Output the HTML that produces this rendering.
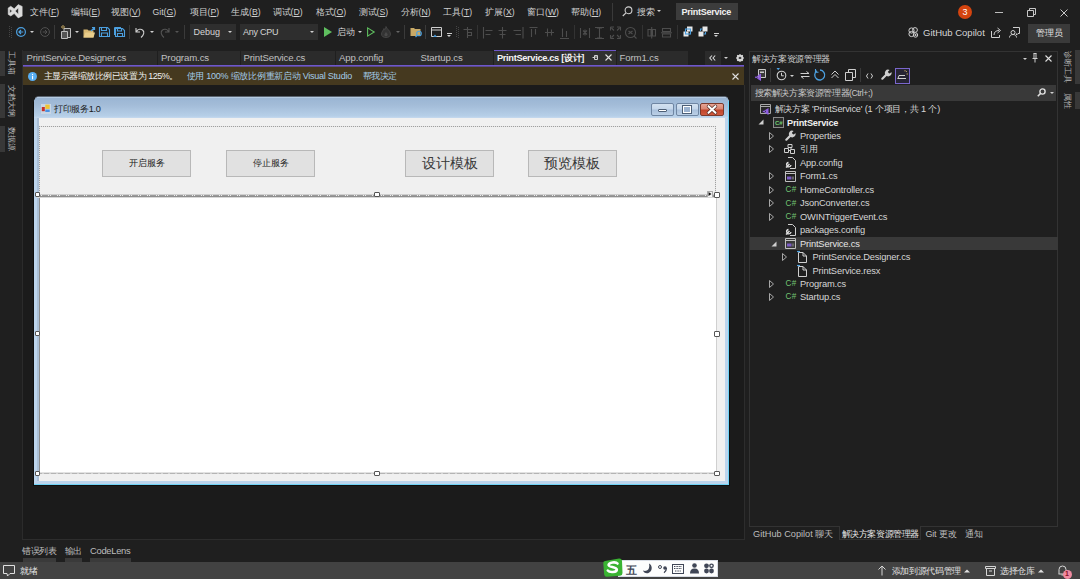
<!DOCTYPE html>
<html><head><meta charset="utf-8">
<style>
*{box-sizing:border-box;margin:0;padding:0}
html,body{width:1080px;height:579px;overflow:hidden;background:#1f1f1f;font-family:"Liberation Sans",sans-serif;color:#d6d6d6}
.a{position:absolute}
.t{position:absolute;font-size:9px;line-height:12px;height:12px;white-space:nowrap}
.m{color:#cfcfcf;font-size:8.7px}
.m u{text-decoration:underline;text-underline-offset:1px}
svg{position:absolute;overflow:visible}
.sep{position:absolute;width:1px;background:#3a3a3a}
.dd{position:absolute;width:0;height:0;border-left:2.5px solid transparent;border-right:2.5px solid transparent;border-top:2.5px solid #d0d0d0}
</style></head><body>

<!-- ===== TITLE / MENU BAR ===== -->
<svg style="left:0;top:0" width="30" height="22" viewBox="0 0 30 22">
 <path d="M8.2 8 L10.8 6.2 L14.2 8.8 L18.2 4.6 L22.2 6.4 V16.1 L18.2 17.9 L14.2 13.6 L10.8 16 L8.2 14.4 Z M9.8 9.3 V12.9 L12.2 11.1 Z M18.3 7.9 L15.3 11.1 L18.3 14.2 Z" fill="#dcdcdc" fill-rule="evenodd" stroke="#dcdcdc" stroke-width="0.5" stroke-linejoin="round"/>
</svg>
<div class="t m" style="left:30px;top:6px">文件(<u>F</u>)</div>
<div class="t m" style="left:70.5px;top:6px">编辑(<u>E</u>)</div>
<div class="t m" style="left:111px;top:6px">视图(<u>V</u>)</div>
<div class="t m" style="left:152.5px;top:6px">Git(<u>G</u>)</div>
<div class="t m" style="left:189.5px;top:6px">项目(<u>P</u>)</div>
<div class="t m" style="left:231px;top:6px">生成(<u>B</u>)</div>
<div class="t m" style="left:272.5px;top:6px">调试(<u>D</u>)</div>
<div class="t m" style="left:315.5px;top:6px">格式(<u>O</u>)</div>
<div class="t m" style="left:358.5px;top:6px">测试(<u>S</u>)</div>
<div class="t m" style="left:400.5px;top:6px">分析(<u>N</u>)</div>
<div class="t m" style="left:443px;top:6px">工具(<u>T</u>)</div>
<div class="t m" style="left:485px;top:6px">扩展(<u>X</u>)</div>
<div class="t m" style="left:527px;top:6px">窗口(<u>W</u>)</div>
<div class="t m" style="left:571px;top:6px">帮助(<u>H</u>)</div>
<div class="sep" style="left:612px;top:3px;height:18px"></div>
<svg style="left:622px;top:6px" width="11" height="11" viewBox="0 0 11 11"><circle cx="6.5" cy="4.3" r="3.4" fill="none" stroke="#cfcfcf" stroke-width="1.1"/><path d="M4 6.8 L0.8 10" stroke="#cfcfcf" stroke-width="1.2"/></svg>
<div class="t m" style="left:637px;top:6px">搜索</div>
<div class="dd" style="left:657px;top:10px"></div>
<div class="a" style="left:676px;top:3px;width:62px;height:17px;background:#3c3c3c"></div>
<div class="t" style="left:681.5px;top:5.5px;color:#f2f2f2;font-weight:bold;font-size:9px;letter-spacing:-0.25px">PrintService</div>

<div class="a" style="left:958px;top:4.5px;width:14px;height:14px;border-radius:50%;background:#d4440f"></div>
<div class="t" style="left:958px;top:5.5px;width:14px;text-align:center;color:#fff;font-size:9px">3</div>
<div class="a" style="left:995px;top:11.5px;width:8px;height:1px;background:#bdbdbd"></div>
<svg style="left:1027px;top:8px" width="9" height="9" viewBox="0 0 9 9"><path d="M0.5 2.5 H6.5 V8.5 H0.5 Z M2.5 2.5 V0.5 H8.5 V6.5 H6.5" fill="none" stroke="#c8c8c8" stroke-width="1"/></svg>
<svg style="left:1060px;top:8.5px" width="8" height="8" viewBox="0 0 8 8"><path d="M0.5 0.5 L7.5 7.5 M7.5 0.5 L0.5 7.5" stroke="#c8c8c8" stroke-width="1"/></svg>

<!-- ===== TOOLBAR ===== -->
<svg style="left:8px;top:26px" width="4" height="13" viewBox="0 0 4 13"><path d="M1 0.5h1M3 1.5h1M1 2.5h1M3 3.5h1M1 4.5h1M3 5.5h1M1 6.5h1M3 7.5h1M1 8.5h1M3 9.5h1M1 10.5h1M3 11.5h1" stroke="#454545" stroke-width="1"/></svg>
<svg style="left:16px;top:26.5px" width="10" height="10" viewBox="0 0 10 10"><circle cx="5" cy="5" r="4.4" fill="none" stroke="#4ca0e0" stroke-width="1.2"/><path d="M7.3 5 H3 M5 3 L3 5 L5 7" fill="none" stroke="#4ca0e0" stroke-width="1.2"/></svg>
<div class="dd" style="left:30px;top:30.5px"></div>
<svg style="left:39.5px;top:26.5px" width="10" height="10" viewBox="0 0 10 10"><circle cx="5" cy="5" r="4.4" fill="none" stroke="#505050" stroke-width="1"/><path d="M2.7 5 H7 M5 3 L7 5 L5 7" fill="none" stroke="#505050" stroke-width="1"/></svg>
<div class="sep" style="left:54px;top:25px;height:14px"></div>
<svg style="left:60px;top:25px" width="13" height="14" viewBox="0 0 13 14"><path d="M4 3.5 H10.5 V12.5 H4 Z" fill="#3a3a3a" stroke="#bdbdbd" stroke-width="1"/><path d="M1.5 6.5 H7.5 V13.5 H1.5 Z" fill="#555" stroke="#bdbdbd" stroke-width="1"/><path d="M3 0.5 L4.5 2 L3 3.5 L1.5 2 Z" fill="none" stroke="#d9b86a" stroke-width="1"/></svg>
<div class="dd" style="left:74.5px;top:30.5px"></div>
<svg style="left:83px;top:26px" width="13" height="12" viewBox="0 0 13 12"><path d="M0.5 3.5 H4.5 L5.5 4.5 H10.5 V11.5 H0.5 Z" fill="#d8b872"/><path d="M0.5 11.5 L2.5 6.5 H12 L10.5 11.5 Z" fill="#e9cd8a"/><path d="M8 5 L11.5 1.5 M9 1.5 H11.5 V4" stroke="#4ca0e0" stroke-width="1.2" fill="none"/></svg>
<svg style="left:98.5px;top:27px" width="11" height="10" viewBox="0 0 11 10"><path d="M0.5 0.5 H8.5 L10.5 2.5 V9.5 H0.5 Z M2.5 0.5 V3.5 H7.5 V0.5 M2.5 9.5 V6 H8.5 V9.5" fill="none" stroke="#4ca0e0" stroke-width="1.1"/></svg>
<svg style="left:113.5px;top:27px" width="11" height="10" viewBox="0 0 11 10"><path d="M1.5 1.5 H8.5 L10.5 3.5 V9.5 H1.5 Z M3.5 1.5 V4 H7.5 V1.5 M3.5 9.5 V6.5 H8.5 V9.5" fill="none" stroke="#4ca0e0" stroke-width="1.1"/><path d="M0.5 8 V0.5 H7" fill="none" stroke="#4ca0e0" stroke-width="1"/></svg>
<div class="sep" style="left:129px;top:25px;height:14px"></div>
<svg style="left:135px;top:26.5px" width="10" height="11" viewBox="0 0 10 11"><path d="M1 1 V5 H5 M1.5 4.5 C3 2 6 1.5 8 3.5 C9.5 5 9 8 6 10.5" fill="none" stroke="#cfcfcf" stroke-width="1.1"/></svg>
<div class="dd" style="left:150px;top:30.5px"></div>
<svg style="left:160px;top:26.5px" width="10" height="11" viewBox="0 0 10 11"><path d="M9 1 V5 H5 M8.5 4.5 C7 2 4 1.5 2 3.5 C0.5 5 1 8 4 10.5" fill="none" stroke="#555" stroke-width="1.1"/></svg>
<div class="dd" style="left:175px;top:30.5px;border-top-color:#555"></div>
<div class="sep" style="left:184px;top:25px;height:14px"></div>

<div class="a" style="left:190px;top:24px;width:46px;height:15.5px;background:#2e2e2e"></div>
<div class="t" style="left:193.5px;top:25.5px;color:#d6d6d6">Debug</div>
<div class="dd" style="left:227.5px;top:30.5px"></div>
<div class="a" style="left:240px;top:24px;width:78px;height:15.5px;background:#2e2e2e"></div>
<div class="t" style="left:243px;top:25.5px;color:#d6d6d6;letter-spacing:-0.25px">Any CPU</div>
<div class="dd" style="left:309.5px;top:30.5px"></div>
<svg style="left:324px;top:27px" width="8" height="10" viewBox="0 0 8 10"><path d="M0 0 L8 5 L0 10 Z" fill="#5fbf5f"/></svg>
<div class="t" style="left:337px;top:25.5px">启动</div>
<div class="dd" style="left:358px;top:30.5px"></div>
<svg style="left:367px;top:27px" width="8" height="10" viewBox="0 0 8 10"><path d="M0.6 0.9 L7.2 5 L0.6 9.1 Z" fill="none" stroke="#5fbf5f" stroke-width="1.1"/></svg>
<svg style="left:381px;top:25.5px" width="10" height="12" viewBox="0 0 10 12"><path d="M5 0.5 C5.5 3 9.5 4.5 9.5 8 C9.5 10.5 7.5 11.5 5 11.5 C2.5 11.5 0.5 10.5 0.5 8 C0.5 5.5 2.5 4.5 3 2.5 C3.5 4 4.5 4.5 5 0.5 Z" fill="#333" stroke="#4a4a4a" stroke-width="0.8"/><path d="M5 6 C6 7.5 7 8 6.5 9.5 C6 10.5 4 10.5 3.5 9.5 C3 8.5 4 7.5 5 6 Z" fill="#4a4a4a"/></svg>
<div class="dd" style="left:395.5px;top:30.5px;border-top-color:#666"></div>
<div class="sep" style="left:404px;top:25px;height:14px"></div>
<svg style="left:410px;top:26px" width="13" height="12" viewBox="0 0 13 12"><path d="M0.5 2 H4 L5 3 H10.5 V10 H0.5 Z" fill="#c8a966"/><circle cx="9" cy="7.5" r="2.3" fill="none" stroke="#4ca0e0" stroke-width="1.1"/><path d="M7.5 9 L5.5 11" stroke="#4ca0e0" stroke-width="1.2"/></svg>
<div class="sep" style="left:425px;top:25px;height:14px"></div>
<svg style="left:431px;top:26.5px" width="11" height="11" viewBox="0 0 11 11"><path d="M0.5 0.5 H10.5 V9.5 H0.5 Z M0.5 3 H10.5" fill="none" stroke="#cfcfcf" stroke-width="1"/><path d="M2 10 L4 7.5 L6 10 Z" fill="#4ca0e0"/></svg>
<div class="a" style="left:446.5px;top:32.5px;width:5px;height:1px;background:#cfcfcf"></div>
<div class="dd" style="left:446.5px;top:34.5px"></div>
<svg style="left:455px;top:26px" width="4" height="13" viewBox="0 0 4 13"><path d="M1 0.5h1M3 1.5h1M1 2.5h1M3 3.5h1M1 4.5h1M3 5.5h1M1 6.5h1M3 7.5h1M1 8.5h1M3 9.5h1M1 10.5h1M3 11.5h1" stroke="#454545" stroke-width="1"/></svg>
<!-- gray layout icons -->
<svg style="left:463px;top:26px" width="10" height="13" viewBox="0 0 10 13" fill="none" stroke="#4d4d4d" stroke-width="1.1"><path d="M0.5 3.5 H9 M4.5 1 V12 M5 6.5 H8.5 V9.5 H5"/></svg>
<div class="sep" style="left:477px;top:25px;height:14px;background:#333"></div>
<svg style="left:483px;top:26px" width="90" height="14" viewBox="0 0 90 14" fill="none" stroke="#4d4d4d" stroke-width="1.1">
 <path d="M0.5 1 V12.5 M2.5 4.5 H9.5 M2.5 8.5 H7.5"/>
 <path d="M19.5 1 V12.5 M15.5 4.5 H23.5 M16.5 8.5 H22.5"/>
 <path d="M40 1 V12.5 M30.5 4.5 H38 M32.5 8.5 H38"/>
 <path d="M46.5 1.5 H54.5 M48.5 3 V11 M52.5 3 V8.5"/>
 <path d="M62 6.5 H71 M64.5 2.5 V10.5 M68.5 3.5 V9.5"/>
 <path d="M77 12.5 H86 M79.5 2.5 V11 M83.5 5 V11"/>
</svg>
<div class="sep" style="left:574px;top:25px;height:14px;background:#333"></div>
<svg style="left:580px;top:26px" width="60" height="14" viewBox="0 0 60 14" fill="none" stroke="#4d4d4d" stroke-width="1.1">
 <path d="M0.5 2 V12 M9.5 2 V12 M3 4.5 L7 8.5 M7 4.5 L3 8.5 M5 3.5 V9.5"/>
 <path d="M15 1.5 H24 M15 12.5 H24 M19.5 2 V12 M17 2 H22 M17 12 H22"/>
 <path d="M30.5 1 H34 M30.5 1 V4.5 M40.5 1 H37 M40.5 1 V4.5 M30.5 12.5 H34 M30.5 12.5 V9 M40.5 12.5 H37 M40.5 12.5 V9 M31.5 2 L34 4.5 M39.5 2 L37 4.5 M31.5 11.5 L34 9 M39.5 11.5 L37 9"/>
 <circle cx="50.5" cy="6.5" r="5"/><path d="M54 10 L56.5 12.5 M48.5 5 L52.5 8 M52.5 5 L48.5 8"/>
</svg>
<div class="sep" style="left:641.5px;top:25px;height:14px;background:#333"></div>
<svg style="left:647px;top:26px" width="26" height="14" viewBox="0 0 26 14" fill="none" stroke="#4d4d4d" stroke-width="1.1">
 <path d="M1 3.5 H4 V10 H1 Z M5.5 3.5 H8.5 V10 H5.5 Z M4.7 1 V12.5"/>
 <path d="M15.5 2.5 H23.5 V5.5 H15.5 Z M15.5 8 H23.5 V11 H15.5 Z M14 6.7 H25"/>
</svg>
<div class="sep" style="left:677px;top:25px;height:14px;background:#333"></div>
<svg style="left:683px;top:26px" width="10" height="11" viewBox="0 0 10 11"><rect x="4" y="0.5" width="5.5" height="5" fill="#e8e8e8"/><rect x="0.5" y="5.5" width="5" height="5" fill="#e8e8e8"/><rect x="2.5" y="3" width="5" height="5" fill="none" stroke="#4ca0e0" stroke-width="1.1"/></svg>
<svg style="left:698px;top:26px" width="10" height="11" viewBox="0 0 10 11"><rect x="4.5" y="0.5" width="5" height="5" fill="#e8e8e8"/><rect x="0.5" y="5.5" width="5" height="5" fill="#e8e8e8"/><path d="M2.5 5 V3 H4.5 M7.5 6 V8 H5.5" fill="none" stroke="#4ca0e0" stroke-width="1.1"/></svg>
<div class="a" style="left:713.5px;top:32.5px;width:5px;height:1px;background:#cfcfcf"></div>
<div class="dd" style="left:713.5px;top:34.5px"></div>

<!-- right title row -->
<svg style="left:908px;top:27px" width="11" height="11" viewBox="0 0 11 11"><circle cx="3.5" cy="3.5" r="2.6" fill="none" stroke="#cfcfcf" stroke-width="1"/><circle cx="7" cy="3" r="2.4" fill="none" stroke="#cfcfcf" stroke-width="1"/><circle cx="3.5" cy="7" r="2.6" fill="none" stroke="#cfcfcf" stroke-width="1"/><circle cx="7.5" cy="8" r="2.2" fill="#1f1f1f" stroke="#cfcfcf" stroke-width="1"/><circle cx="7.5" cy="8" r="1.1" fill="#cfcfcf"/></svg>
<div class="t" style="left:923px;top:26.5px;font-size:9.5px;color:#d6d6d6">GitHub Copilot</div>
<svg style="left:991px;top:27px" width="11" height="11" viewBox="0 0 11 11"><path d="M0.5 4 V10.5 H8.5 V8" fill="none" stroke="#cfcfcf" stroke-width="1"/><path d="M3 8 C3 5 5 3.5 8 3.5 M6.5 1 L9.5 3.5 L6.5 6" fill="none" stroke="#cfcfcf" stroke-width="1"/></svg>
<svg style="left:1009px;top:27px" width="11" height="11" viewBox="0 0 11 11"><path d="M4 0.5 H10.5 V6.5 H9 L7.5 8 V6.5" fill="none" stroke="#cfcfcf" stroke-width="1"/><circle cx="4" cy="5.5" r="2" fill="#1f1f1f" stroke="#cfcfcf" stroke-width="1"/><path d="M0.5 10.5 C0.5 8.5 2 7.5 4 7.5 C6 7.5 7.5 8.5 7.5 10.5" fill="none" stroke="#cfcfcf" stroke-width="1"/></svg>
<div class="a" style="left:1028px;top:24px;width:42px;height:18.5px;background:#3a3a3a"></div>
<div class="t" style="left:1028px;top:27px;width:42px;text-align:center;color:#e6e6e6">管理员</div>

<!-- ===== LEFT SIDEBAR ===== -->
<div class="a" style="left:0;top:51px;width:4.5px;height:25px;background:#383838"></div>
<div class="a" style="left:0;top:84px;width:4.5px;height:34px;background:#383838"></div>
<div class="a" style="left:0;top:126px;width:4.5px;height:26px;background:#383838"></div>
<div class="t" style="left:16.8px;top:51px;transform-origin:0 0;transform:rotate(90deg);color:#b8b8b8;font-size:8.3px;line-height:10px">工具箱</div>
<div class="t" style="left:16.8px;top:84.5px;transform-origin:0 0;transform:rotate(90deg);color:#b8b8b8;font-size:8.3px;line-height:10px">文档大纲</div>
<div class="t" style="left:16.8px;top:126.5px;transform-origin:0 0;transform:rotate(90deg);color:#b8b8b8;font-size:8.3px;line-height:10px">数据源</div>
<div class="a" style="left:22px;top:50px;width:1px;height:490px;background:#2b2b2b"></div>

<!-- ===== DOC TABS ===== -->
<div class="a" style="left:23px;top:50.5px;width:134px;height:14.5px;background:#2b2b2b"></div>
<div class="a" style="left:157.5px;top:50.5px;width:82px;height:14.5px;background:#2b2b2b"></div>
<div class="a" style="left:240.5px;top:50.5px;width:94.5px;height:14.5px;background:#2b2b2b"></div>
<div class="a" style="left:335.5px;top:50.5px;width:81px;height:14.5px;background:#2b2b2b"></div>
<div class="a" style="left:417px;top:50.5px;width:76px;height:14.5px;background:#2b2b2b"></div>
<div class="a" style="left:494px;top:50px;width:122px;height:15px;background:#303030;border-top:1.5px solid #6d55c9"></div>
<div class="a" style="left:616.5px;top:50.5px;width:71.5px;height:14.5px;background:#2b2b2b"></div>
<div class="t" style="left:26.5px;top:51.5px;color:#c0c0c0;font-size:9.6px;letter-spacing:-0.2px">PrintService.Designer.cs</div>
<div class="t" style="left:161px;top:51.5px;color:#c0c0c0;font-size:9.6px;letter-spacing:-0.1px">Program.cs</div>
<div class="t" style="left:243.5px;top:51.5px;color:#c0c0c0;font-size:9.6px;letter-spacing:-0.15px">PrintService.cs</div>
<div class="t" style="left:339px;top:51.5px;color:#c0c0c0;font-size:9.6px;letter-spacing:-0.1px">App.config</div>
<div class="t" style="left:420.5px;top:51.5px;color:#c0c0c0;font-size:9.6px;letter-spacing:-0.1px">Startup.cs</div>
<div class="t" style="left:497px;top:51.5px;color:#f4f4f4;font-size:9.3px;font-weight:bold;letter-spacing:-0.35px">PrintService.cs [设计]</div>
<svg style="left:592px;top:54px" width="7" height="7" viewBox="0 0 7 7"><path d="M0.5 3.5 H2.5 M2.5 1.5 V5.5 M2.5 1.5 H5.5 V5.5 H2.5 M2.5 3 H5.5" fill="none" stroke="#d0d0d0" stroke-width="1"/></svg>
<svg style="left:604.5px;top:54px" width="7" height="7" viewBox="0 0 7 7"><path d="M0.5 0.5 L6.5 6.5 M6.5 0.5 L0.5 6.5" stroke="#e0e0e0" stroke-width="1.1"/></svg>
<div class="t" style="left:619.5px;top:51.5px;color:#c0c0c0;font-size:9.6px;letter-spacing:-0.1px">Form1.cs</div>
<div class="a" style="left:705px;top:50.5px;width:15.5px;height:14.5px;background:#2b2b2b"></div>
<svg style="left:709px;top:54.5px" width="7" height="6" viewBox="0 0 7 6"><path d="M3 0.5 L0.8 3 L3 5.5 M6.2 0.5 L4 3 L6.2 5.5" fill="none" stroke="#d6d6d6" stroke-width="1.1"/></svg>
<div class="dd" style="left:724px;top:57px"></div>
<svg style="left:735.5px;top:53.5px" width="8" height="8" viewBox="0 0 8 8"><circle cx="4" cy="4" r="2.6" fill="none" stroke="#d6d6d6" stroke-width="1.5"/><path d="M4 0 V8 M0 4 H8 M1.2 1.2 L6.8 6.8 M6.8 1.2 L1.2 6.8" stroke="#d6d6d6" stroke-width="1.1"/><circle cx="4" cy="4" r="1.1" fill="#1f1f1f"/></svg>
<div class="a" style="left:23px;top:65px;width:721px;height:1px;background:#6f57cc"></div><div class="a" style="left:23px;top:66px;width:721px;height:1px;background:#5b4a8c"></div>

<!-- info bar -->
<div class="a" style="left:23px;top:67px;width:721px;height:18px;background:#45391f"></div>
<svg style="left:28px;top:71.5px" width="9" height="9" viewBox="0 0 9 9"><circle cx="4.5" cy="4.5" r="4.5" fill="#58aef2"/><rect x="4" y="3.8" width="1.1" height="3.5" fill="#fff"/><rect x="4" y="1.9" width="1.1" height="1.1" fill="#fff"/></svg>
<div class="t" style="left:43.5px;top:70px;color:#f0f0f0;font-size:9px;letter-spacing:-0.45px">主显示器缩放比例已设置为 125%。</div>
<div class="t" style="left:186.5px;top:70px;color:#a3cbe8;font-size:9px;letter-spacing:-0.25px">使用 100% 缩放比例重新启动 Visual Studio</div>
<div class="t" style="left:362.5px;top:70px;color:#a3cbe8;font-size:9px;letter-spacing:-0.45px">帮我决定</div>
<svg style="left:731.5px;top:72.5px" width="7" height="7" viewBox="0 0 7 7"><path d="M0.5 0.5 L6.5 6.5 M6.5 0.5 L0.5 6.5" stroke="#e0e0e0" stroke-width="1.1"/></svg>

<!-- designer area border -->
<div class="a" style="left:23px;top:85px;width:721px;height:454px;background:#1b1b1b"></div>
<div class="a" style="left:744px;top:85px;width:1px;height:455px;background:#2d2d2d"></div>
<div class="a" style="left:22px;top:539px;width:723px;height:1px;background:#2d2d2d"></div>

<!-- ===== FORM WINDOW ===== -->
<div class="a" style="left:33px;top:96px;width:697px;height:390px;border-radius:6px 6px 0 0;background:#bcd4ec;border:1px solid #0e0e0e;border-top-color:#5a6470"></div>
<div class="a" style="left:37px;top:117px;width:2px;height:364px;background:#aabfd7"></div>
<div class="a" style="left:34px;top:97px;width:695px;height:21px;border-radius:5px 5px 0 0;background:linear-gradient(#c3d6ea 0,#9bb6d4 1.5px,#a3bcd8 8px,#b6cfe8 19px,#c6daef 21px)"></div>
<div class="a" style="left:728px;top:101px;width:1.2px;height:384px;background:#6fd3f6"></div>
<div class="a" style="left:34px;top:484px;width:695px;height:1.2px;background:#6fd3f6"></div>
<svg style="left:40.5px;top:104px" width="10" height="10" viewBox="0 0 10 10"><rect x="0" y="0" width="10" height="10" fill="#c9d6e4"/><rect x="0.8" y="3" width="3" height="4.2" fill="#c4302a"/><rect x="4.3" y="0.6" width="4.4" height="4.3" fill="#f0c431"/><rect x="4.3" y="5.6" width="4.4" height="2.4" fill="#4a90e2"/></svg>
<div class="t" style="left:54px;top:102.5px;color:#1a1a1a;font-size:9.2px;letter-spacing:-0.3px">打印服务1.0</div>
<!-- caption buttons -->
<div class="a" style="left:650.5px;top:102.5px;width:23px;height:13px;border:1px solid #6f86a3;border-radius:2px;background:linear-gradient(#d3e1f0 0,#c5d7eb 45%,#a9c0dc 55%,#bcd0e6 100%)"></div>
<div class="a" style="left:658px;top:108.5px;width:8.5px;height:3px;background:#fff;border:0.6px solid #4d5f76;border-radius:1px"></div>
<div class="a" style="left:675.5px;top:102.5px;width:23px;height:13px;border:1px solid #6f86a3;border-radius:2px;background:linear-gradient(#d3e1f0 0,#c5d7eb 45%,#a9c0dc 55%,#bcd0e6 100%)"></div>
<div class="a" style="left:683px;top:105.5px;width:8px;height:7px;background:#9bb2cf;border:1.6px solid #fff;outline:0.6px solid #4d5f76"></div>
<div class="a" style="left:700px;top:102.5px;width:23.5px;height:13px;border:1px solid #7b3a2c;border-radius:2px;background:linear-gradient(#e7a595 0,#d98672 45%,#c1452b 55%,#cf5a3f 100%)"></div>
<svg style="left:707px;top:104.5px" width="10" height="9" viewBox="0 0 10 9"><path d="M1.5 1.2 L8.5 7.8 M8.5 1.2 L1.5 7.8" stroke="#4a2018" stroke-width="3.4" stroke-linecap="round"/><path d="M1.5 1.2 L8.5 7.8 M8.5 1.2 L1.5 7.8" stroke="#fff" stroke-width="2.2" stroke-linecap="round"/></svg>

<!-- client area -->
<div class="a" style="left:39px;top:117.5px;width:685.5px;height:363px;background:#f0f0f0"></div>
<!-- panel dashed -->
<div class="a" style="left:39px;top:126px;width:677px;height:1px;background:repeating-linear-gradient(90deg,#a0a0a0 0 1px,#e4e4e4 1px 2px)"></div>
<div class="a" style="left:39px;top:126px;width:1px;height:68px;background:repeating-linear-gradient(180deg,#a0a0a0 0 1px,#e4e4e4 1px 2px)"></div>
<div class="a" style="left:715px;top:126px;width:1px;height:66px;background:repeating-linear-gradient(180deg,#a0a0a0 0 1px,#e4e4e4 1px 2px)"></div>
<!-- buttons -->
<div class="a" style="left:102px;top:150px;width:89px;height:26.5px;background:#e1e1e1;border:1px solid #b8b8b8"></div>
<div class="t" style="left:102px;top:157px;width:89px;text-align:center;color:#1a1a1a;font-size:8.8px">开启服务</div>
<div class="a" style="left:226px;top:150px;width:89px;height:26.5px;background:#e1e1e1;border:1px solid #b8b8b8"></div>
<div class="t" style="left:226px;top:157px;width:89px;text-align:center;color:#1a1a1a;font-size:8.8px">停止服务</div>
<div class="a" style="left:405px;top:150px;width:89px;height:26.5px;background:#e1e1e1;border:1px solid #b8b8b8"></div>
<div class="t" style="left:405px;top:155.5px;width:89px;height:16px;line-height:16px;text-align:center;color:#383838;font-size:13.5px;font-family:'Liberation Serif',serif">设计模板</div>
<div class="a" style="left:527.5px;top:150px;width:89px;height:26.5px;background:#e1e1e1;border:1px solid #b8b8b8"></div>
<div class="t" style="left:527.5px;top:155.5px;width:89px;height:16px;line-height:16px;text-align:center;color:#383838;font-size:13.5px;font-family:'Liberation Serif',serif">预览模板</div>

<!-- textbox -->
<div class="a" style="left:39px;top:197px;width:677.5px;height:275px;background:#fff;border-left:1px solid #8c8c8c;border-right:1px solid #d0d0d0"></div>
<div class="a" style="left:37px;top:194px;width:680px;height:1px;background:#cfcfcf"></div>
<div class="a" style="left:37px;top:195px;width:680px;height:1px;background:repeating-linear-gradient(90deg,#9a9a9a 0 2px,#eeeeee 2px 3px,#9a9a9a 3px 4px,#eeeeee 4px 5px,#9a9a9a 5px 9px)"></div>
<div class="a" style="left:37px;top:196px;width:680px;height:1px;background:#8e8e8e"></div>
<div class="a" style="left:37px;top:197px;width:680px;height:1px;background:#d8d8d8"></div>
<div class="a" style="left:37px;top:472px;width:680px;height:1px;background:#e2e2e2"></div>
<div class="a" style="left:37px;top:473px;width:680px;height:1px;background:repeating-linear-gradient(90deg,#b4b4b4 0 5px,#d4d4d4 5px 7px)"></div>
<!-- handles -->
<div class="a" style="left:35px;top:192px;width:5px;height:5px;background:#fff;border:1px solid #555;border-radius:1px"></div>
<div class="a" style="left:374px;top:192px;width:6px;height:5px;background:#fff;border:1px solid #555;border-radius:1px"></div>
<div class="a" style="left:714px;top:192px;width:6px;height:5.5px;background:#fff;border:1px solid #555;border-radius:1px"></div>
<div class="a" style="left:706.5px;top:190.5px;width:6px;height:6.5px;background:#f4f4f4;border:1px solid #aaa;border-bottom:none;border-radius:1px"></div>
<svg style="left:708px;top:192px" width="4" height="4" viewBox="0 0 4 4"><path d="M0.5 0 L3.5 2 L0.5 4 Z" fill="#111"/></svg>
<div class="a" style="left:35px;top:331px;width:5px;height:5px;background:#fff;border:1px solid #555;border-radius:1px"></div>
<div class="a" style="left:714px;top:331px;width:6px;height:5.5px;background:#fff;border:1px solid #555;border-radius:1px"></div>
<div class="a" style="left:35px;top:470.5px;width:5px;height:5px;background:#fff;border:1px solid #555;border-radius:1px"></div>
<div class="a" style="left:374px;top:470.5px;width:6px;height:5px;background:#fff;border:1px solid #555;border-radius:1px"></div>
<div class="a" style="left:714px;top:470.5px;width:6px;height:5.5px;background:#fff;border:1px solid #555;border-radius:1px"></div>

<!-- ===== BOTTOM TABS ===== -->
<div class="t" style="left:22px;top:544.5px;color:#bdbdbd;font-size:8.6px;letter-spacing:-0.3px">错误列表</div>
<div class="t" style="left:64.5px;top:544.5px;color:#bdbdbd;font-size:8.6px;letter-spacing:-0.3px">输出</div>
<div class="t" style="left:90px;top:544.5px;color:#bdbdbd;font-size:9.4px;letter-spacing:-0.3px">CodeLens</div>
<div class="a" style="left:22.5px;top:557.5px;width:33.5px;height:4px;background:#3a3a3a"></div>
<div class="a" style="left:65px;top:557.5px;width:16.5px;height:4px;background:#3a3a3a"></div>
<div class="a" style="left:90px;top:557.5px;width:40.5px;height:4px;background:#3a3a3a"></div>

<!-- ===== SOLUTION EXPLORER ===== -->
<div class="a" style="left:749px;top:50.5px;width:309px;height:476px;border:1px solid #333"></div>
<div class="t" style="left:752px;top:53px;color:#cfcfcf;font-size:8.6px;letter-spacing:-0.35px">解决方案资源管理器</div>
<div class="dd" style="left:1023px;top:57.5px"></div>
<svg style="left:1032px;top:52.5px" width="6" height="10" viewBox="0 0 6 10"><path d="M1.5 0.5 H4.5 M2 0.5 V5.5 M4 0.5 V5.5 M0.5 5.5 H5.5 M3 5.5 V9.5" fill="none" stroke="#d0d0d0" stroke-width="1"/></svg>
<svg style="left:1045px;top:54.5px" width="7" height="7" viewBox="0 0 7 7"><path d="M0.5 0.5 L6.5 6.5 M6.5 0.5 L0.5 6.5" stroke="#e0e0e0" stroke-width="1.1"/></svg>
<!-- SE toolbar -->
<svg style="left:754px;top:68.5px" width="12" height="13" viewBox="0 0 12 13"><path d="M4.5 0.5 H11.5 V8.5 H4.5 Z" fill="#3a3a3a" stroke="#c8c8c8" stroke-width="1"/><path d="M6 2.5 H10 V4 H6 Z" fill="#c8c8c8"/><path d="M4.5 6 L7 4.5 V12 L4.5 10.5 L2 8.6 L1 9.3 V7.2 L2 7.9 Z M4.5 7.3 L3.3 8.25 L4.5 9.2 Z" fill="#8e5fe0" fill-rule="evenodd"/></svg>
<div class="sep" style="left:770px;top:68px;height:14px;background:#3a3a3a"></div>
<svg style="left:776px;top:68px" width="11" height="13" viewBox="0 0 11 13"><path d="M0.5 0 H4 L2.2 2.2 Z" fill="#4ca0e0"/><circle cx="5.5" cy="7.5" r="4.3" fill="none" stroke="#cfcfcf" stroke-width="1.1"/><path d="M5.5 4.8 V7.8 H7.8" fill="none" stroke="#cfcfcf" stroke-width="1"/></svg>
<div class="dd" style="left:790px;top:75px"></div>
<svg style="left:800px;top:71px" width="10" height="8" viewBox="0 0 10 8"><path d="M0.5 2.5 H9 M6.5 0.5 L9 2.5 M9.5 5.5 H1 M3.5 7.5 L1 5.5" fill="none" stroke="#cfcfcf" stroke-width="1"/></svg>
<svg style="left:814px;top:68.5px" width="12" height="12" viewBox="0 0 12 12"><path d="M3 1.8 A5 5 0 1 0 6 1" fill="none" stroke="#4ca0e0" stroke-width="1.3"/><path d="M1.5 0 V3.2 H4.5" fill="none" stroke="#4ca0e0" stroke-width="1.1"/></svg>
<svg style="left:831px;top:70px" width="8" height="9" viewBox="0 0 8 9"><path d="M0.5 4.5 L4 1 L7.5 4.5 M0.5 8 L4 4.5 L7.5 8" fill="none" stroke="#cfcfcf" stroke-width="1"/></svg>
<svg style="left:845px;top:69px" width="11" height="12" viewBox="0 0 11 12"><path d="M3.5 0.5 H10.5 V8.5 H3.5 Z" fill="#1f1f1f" stroke="#cfcfcf" stroke-width="1"/><path d="M0.5 3.5 H7.5 V11.5 H0.5 Z" fill="#1f1f1f" stroke="#cfcfcf" stroke-width="1"/></svg>
<div class="sep" style="left:860px;top:68px;height:14px;background:#3a3a3a"></div>
<svg style="left:866px;top:72.5px" width="7" height="6" viewBox="0 0 7 6"><path d="M2 0.5 L0.5 3 L2 5.5 M5 0.5 L6.5 3 L5 5.5" fill="none" stroke="#cfcfcf" stroke-width="1"/></svg>
<svg style="left:881px;top:69px" width="11" height="11" viewBox="0 0 11 11"><path d="M1.3 9.7 L5.5 5.5" stroke="#cfcfcf" stroke-width="2.2" stroke-linecap="round"/><path d="M4.6 6.2 A3.4 3.4 0 0 1 8.6 0.9 L6.9 2.7 L7.6 3.9 L8.8 4.6 L10.5 2.9 A3.4 3.4 0 0 1 5.6 6.9 Z" fill="#cfcfcf"/></svg>
<div class="a" style="left:894.5px;top:67.5px;width:15px;height:16px;border:1px solid #7a66cc;background:#262433"></div>
<svg style="left:896.5px;top:70px" width="12" height="10" viewBox="0 0 12 10"><path d="M0.5 8.5 H9 M1 8.5 L2 5.5 H8" fill="none" stroke="#d0d0d0" stroke-width="1"/><path d="M9 2 L10 1 M9.5 4 H11 M8 1.5 V0" stroke="#d9b86a" stroke-width="0.8"/></svg>
<!-- search -->
<div class="a" style="left:751px;top:85px;width:305px;height:15.5px;background:#393939"></div>
<div class="t" style="left:754.5px;top:87px;color:#c8c8c8;font-size:8.6px;letter-spacing:-0.4px">搜索解决方案资源管理器(Ctrl+;)</div>
<svg style="left:1037px;top:87.5px" width="9" height="9" viewBox="0 0 9 9"><circle cx="5.5" cy="3.5" r="2.6" fill="none" stroke="#e0e0e0" stroke-width="1.4"/><path d="M3.5 5.5 L0.8 8.2" stroke="#e0e0e0" stroke-width="1.6"/></svg>
<div class="dd" style="left:1049.5px;top:91.5px;border-left-width:2.5px;border-right-width:2.5px;border-top-width:2.5px"></div>

<!-- tree -->
<div class="a" style="left:750px;top:237px;width:308px;height:13px;background:#393939"></div>
<svg style="left:760px;top:103.5px" width="11" height="11" viewBox="0 0 11 11"><path d="M0.5 0.5 H10.5 V9.5 H0.5 Z M0.5 2.5 H10.5" fill="#262626" stroke="#a8a8a8" stroke-width="1"/><path d="M6 5.5 L8.5 4 V11 L6 9.5 L3.8 7.9 L2.8 8.6 V6.4 L3.8 7.1 Z M6 6.6 L5 7.5 L6 8.4 Z" fill="#8e5fe0" fill-rule="evenodd"/></svg>
<div class="t" style="left:774.5px;top:103px;color:#d6d6d6;font-size:9.2px;letter-spacing:-0.2px">解决方案 'PrintService' (1 个项目，共 1 个)</div>

<svg style="left:757.5px;top:118.5px" width="6" height="6" viewBox="0 0 6 6"><path d="M5.5 0.5 V5.5 H0.5 Z" fill="#d0d0d0"/></svg>
<svg style="left:773px;top:117px" width="11" height="11" viewBox="0 0 11 11"><rect x="0.5" y="0.5" width="10" height="10" fill="#2a2a2a" stroke="#8a8a8a" stroke-width="1"/><text x="2" y="8" font-size="6" fill="#6fce6f" font-family="Liberation Sans" font-weight="bold">C#</text></svg>
<div class="t" style="left:787px;top:116.5px;color:#f0f0f0;font-size:9.2px;font-weight:bold;letter-spacing:-0.2px">PrintService</div>

<!-- row arrows -->
<svg style="left:769px;top:131.5px" width="5" height="8" viewBox="0 0 5 8"><path d="M0.5 0.5 L4.5 4 L0.5 7.5 Z" fill="none" stroke="#a8a8a8" stroke-width="1"/></svg>
<svg style="left:769px;top:145px" width="5" height="8" viewBox="0 0 5 8"><path d="M0.5 0.5 L4.5 4 L0.5 7.5 Z" fill="none" stroke="#a8a8a8" stroke-width="1"/></svg>
<svg style="left:769px;top:172px" width="5" height="8" viewBox="0 0 5 8"><path d="M0.5 0.5 L4.5 4 L0.5 7.5 Z" fill="none" stroke="#a8a8a8" stroke-width="1"/></svg>
<svg style="left:769px;top:185.5px" width="5" height="8" viewBox="0 0 5 8"><path d="M0.5 0.5 L4.5 4 L0.5 7.5 Z" fill="none" stroke="#a8a8a8" stroke-width="1"/></svg>
<svg style="left:769px;top:199px" width="5" height="8" viewBox="0 0 5 8"><path d="M0.5 0.5 L4.5 4 L0.5 7.5 Z" fill="none" stroke="#a8a8a8" stroke-width="1"/></svg>
<svg style="left:769px;top:212.5px" width="5" height="8" viewBox="0 0 5 8"><path d="M0.5 0.5 L4.5 4 L0.5 7.5 Z" fill="none" stroke="#a8a8a8" stroke-width="1"/></svg>
<svg style="left:770.5px;top:240.5px" width="6" height="6" viewBox="0 0 6 6"><path d="M5.5 0.5 V5.5 H0.5 Z" fill="#d0d0d0"/></svg>
<svg style="left:782px;top:253px" width="5" height="8" viewBox="0 0 5 8"><path d="M0.5 0.5 L4.5 4 L0.5 7.5 Z" fill="none" stroke="#a8a8a8" stroke-width="1"/></svg>
<svg style="left:769px;top:280px" width="5" height="8" viewBox="0 0 5 8"><path d="M0.5 0.5 L4.5 4 L0.5 7.5 Z" fill="none" stroke="#a8a8a8" stroke-width="1"/></svg>
<svg style="left:769px;top:293px" width="5" height="8" viewBox="0 0 5 8"><path d="M0.5 0.5 L4.5 4 L0.5 7.5 Z" fill="none" stroke="#a8a8a8" stroke-width="1"/></svg>

<!-- row icons -->
<svg style="left:785px;top:130px" width="11" height="11" viewBox="0 0 11 11"><path d="M1.3 9.7 L5.5 5.5" stroke="#cfcfcf" stroke-width="2.2" stroke-linecap="round"/><path d="M4.6 6.2 A3.4 3.4 0 0 1 8.6 0.9 L6.9 2.7 L7.6 3.9 L8.8 4.6 L10.5 2.9 A3.4 3.4 0 0 1 5.6 6.9 Z" fill="#cfcfcf"/></svg>
<svg style="left:784px;top:144px" width="12" height="10" viewBox="0 0 12 10"><path d="M0.5 4.5 H4.5 V8.5 H0.5 Z M6.5 5.5 H10.5 V9.5 H6.5 Z M4 0.5 H8 V3.5 H4 Z M4.5 6.5 H6.5 M6 3.5 L8 5.5" fill="none" stroke="#cfcfcf" stroke-width="1"/></svg>
<svg style="left:785px;top:156.5px" width="11" height="12" viewBox="0 0 11 12"><path d="M3 0.5 H7.5 L10.5 3.5 V11.5 H5" fill="none" stroke="#cfcfcf" stroke-width="1"/><path d="M1 10.5 L4.5 7 M3.5 5.5 A2.2 2.2 0 1 0 6 8" fill="none" stroke="#e0e0e0" stroke-width="1.4"/></svg>
<svg style="left:785px;top:170.5px" width="11" height="11" viewBox="0 0 11 11"><path d="M0.5 0.5 H10.5 V10.5 H0.5 Z M0.5 2.5 H10.5" fill="none" stroke="#c0c0c0" stroke-width="1"/><rect x="2" y="5.5" width="4.5" height="3" fill="#7b5cc4"/><rect x="7" y="5.5" width="2" height="3" fill="#666"/></svg>
<div class="t" style="left:785.5px;top:184px;color:#72c472;font-size:8.2px;letter-spacing:0.3px">C#</div>
<div class="t" style="left:785.5px;top:197.5px;color:#72c472;font-size:8.2px;letter-spacing:0.3px">C#</div>
<div class="t" style="left:785.5px;top:211px;color:#72c472;font-size:8.2px;letter-spacing:0.3px">C#</div>
<svg style="left:785px;top:224px" width="11" height="12" viewBox="0 0 11 12"><path d="M3 0.5 H7.5 L10.5 3.5 V11.5 H5" fill="none" stroke="#cfcfcf" stroke-width="1"/><path d="M1 10.5 L4.5 7 M3.5 5.5 A2.2 2.2 0 1 0 6 8" fill="none" stroke="#e0e0e0" stroke-width="1.4"/></svg>
<svg style="left:785px;top:238px" width="11" height="11" viewBox="0 0 11 11"><path d="M0.5 0.5 H10.5 V10.5 H0.5 Z M0.5 2.5 H10.5" fill="none" stroke="#c0c0c0" stroke-width="1"/><rect x="2" y="5.5" width="4.5" height="3" fill="#7b5cc4"/><rect x="7" y="5.5" width="2" height="3" fill="#666"/></svg>
<svg style="left:797px;top:251px" width="10" height="12" viewBox="0 0 10 12"><path d="M1.5 1.5 H6 L9.5 5 V11.5 H1.5 Z M6 1.5 V5 H9.5" fill="none" stroke="#cfcfcf" stroke-width="1"/><path d="M0 0.5 H3" stroke="#4ca0e0" stroke-width="1.2"/></svg>
<svg style="left:797px;top:264.5px" width="10" height="12" viewBox="0 0 10 12"><path d="M1.5 1.5 H6 L9.5 5 V11.5 H1.5 Z M6 1.5 V5 H9.5" fill="none" stroke="#cfcfcf" stroke-width="1"/><path d="M0 0.5 H3" stroke="#4ca0e0" stroke-width="1.2"/></svg>
<div class="t" style="left:785.5px;top:278px;color:#72c472;font-size:8.2px;letter-spacing:0.3px">C#</div>
<div class="t" style="left:785.5px;top:291px;color:#72c472;font-size:8.2px;letter-spacing:0.3px">C#</div>

<!-- row labels -->
<div class="t" style="left:800px;top:129.5px;color:#d6d6d6;font-size:9.3px;letter-spacing:-0.15px">Properties</div>
<div class="t" style="left:800px;top:143px;color:#d6d6d6;font-size:9px">引用</div>
<div class="t" style="left:800px;top:156.5px;color:#d6d6d6;font-size:9.3px;letter-spacing:-0.15px">App.config</div>
<div class="t" style="left:800px;top:170px;color:#d6d6d6;font-size:9.3px;letter-spacing:-0.15px">Form1.cs</div>
<div class="t" style="left:800px;top:183.5px;color:#d6d6d6;font-size:9.3px;letter-spacing:-0.15px">HomeController.cs</div>
<div class="t" style="left:800px;top:197px;color:#d6d6d6;font-size:9.3px;letter-spacing:-0.15px">JsonConverter.cs</div>
<div class="t" style="left:800px;top:210.5px;color:#d6d6d6;font-size:9.3px;letter-spacing:-0.15px">OWINTriggerEvent.cs</div>
<div class="t" style="left:800px;top:224px;color:#d6d6d6;font-size:9.3px;letter-spacing:-0.15px">packages.config</div>
<div class="t" style="left:800px;top:237.5px;color:#e6e6e6;font-size:9.3px;letter-spacing:-0.15px">PrintService.cs</div>
<div class="t" style="left:812.5px;top:251px;color:#d6d6d6;font-size:9.3px;letter-spacing:-0.15px">PrintService.Designer.cs</div>
<div class="t" style="left:812.5px;top:264.5px;color:#d6d6d6;font-size:9.3px;letter-spacing:-0.15px">PrintService.resx</div>
<div class="t" style="left:800px;top:278px;color:#d6d6d6;font-size:9.3px;letter-spacing:-0.15px">Program.cs</div>
<div class="t" style="left:800px;top:291px;color:#d6d6d6;font-size:9.3px;letter-spacing:-0.15px">Startup.cs</div>

<!-- SE bottom tabs -->
<div class="t" style="left:753px;top:527.5px;color:#bdbdbd;font-size:9.2px;letter-spacing:0px">GitHub Copilot 聊天</div>
<div class="a" style="left:838.5px;top:526px;width:82.5px;height:14px;border:1px solid #333;border-top:none;background:#1f1f1f"></div>
<div class="t" style="left:841.5px;top:527.5px;color:#e6e6e6;font-size:8.6px;letter-spacing:-0.4px">解决方案资源管理器</div>
<div class="t" style="left:925.5px;top:527.5px;color:#bdbdbd;font-size:9px;letter-spacing:-0.2px">Git 更改</div>
<div class="t" style="left:965px;top:527.5px;color:#bdbdbd;font-size:8.6px">通知</div>

<!-- ===== RIGHT SIDEBAR ===== -->
<div class="a" style="left:1075px;top:50px;width:5px;height:34px;background:#383838"></div>
<div class="a" style="left:1075px;top:92px;width:5px;height:17px;background:#383838"></div>
<div class="t" style="left:1072px;top:51px;transform-origin:0 0;transform:rotate(90deg);color:#b0b0b0;font-size:8.2px;line-height:10px">诊断工具</div>
<div class="t" style="left:1072px;top:92.5px;transform-origin:0 0;transform:rotate(90deg);color:#b0b0b0;font-size:8.2px;line-height:10px">属性</div>

<!-- ===== STATUS BAR ===== -->
<div class="a" style="left:0;top:562px;width:1080px;height:17px;background:#424242"></div>
<svg style="left:3px;top:564.5px" width="12" height="12" viewBox="0 0 12 12"><path d="M0.5 0.5 H11.5 V8.5 H7 L4.5 11 L4 8.5 H0.5 Z" fill="none" stroke="#e0e0e0" stroke-width="1"/></svg>
<div class="t" style="left:20px;top:565px;color:#e6e6e6;font-size:8.6px">就绪</div>
<!-- IME bar -->
<div class="a" style="left:618px;top:560px;width:100px;height:17px;background:#fdfdfd;border:1px solid #d8dce4"></div>
<svg style="left:603px;top:558px" width="20" height="19" viewBox="0 0 20 19"><path d="M2 3 L16 0.5 Q18.5 0.2 19 2.7 L19.5 15 Q19.5 17.5 17 17.8 L4 18.8 Q1.5 19 1.2 16.5 L0.3 5.5 Q0 3.3 2 3 Z" fill="#3ab332"/><path d="M14.5 5.5 C13 3.8 6 4 5.6 7 C5.3 9.5 13.5 8.5 13.8 11.5 C14 14.5 6.5 14.8 4.8 12.5" fill="none" stroke="#fff" stroke-width="2.6" stroke-linecap="round"/></svg>
<div class="t" style="left:626px;top:563px;color:#404656;font-size:11px;line-height:14px;height:14px;font-weight:bold">五</div>
<svg style="left:643px;top:563px" width="10" height="11" viewBox="0 0 10 11"><path d="M6 0.5 C9.5 2 10 8 5.5 10 C3 11 0.5 9.5 0 7.5 C3 9 7.5 7 6 0.5 Z" fill="#404656"/></svg>
<div class="a" style="left:657.5px;top:564.5px;width:4px;height:4px;border:1px solid #404656;border-radius:50%"></div>
<svg style="left:663px;top:566px" width="4" height="7" viewBox="0 0 4 7"><circle cx="2" cy="2" r="1.8" fill="#404656"/><path d="M3.5 2 Q3.5 5 1 6.8" stroke="#404656" stroke-width="1.2" fill="none"/></svg>
<svg style="left:672px;top:563.5px" width="12" height="10" viewBox="0 0 12 10"><rect x="0.5" y="0.5" width="11" height="9" fill="none" stroke="#404656" stroke-width="1"/><path d="M2 2.5 H10 M2 4.5 H10 M3 7 H9" stroke="#404656" stroke-width="1" stroke-dasharray="1 0.6"/></svg>
<svg style="left:690px;top:563px" width="9" height="11" viewBox="0 0 9 11"><circle cx="4.5" cy="2.5" r="2.3" fill="#404656"/><path d="M0 10.5 Q0 5.5 4.5 5.5 Q9 5.5 9 10.5 Z" fill="#404656"/></svg>
<svg style="left:704px;top:563px" width="10" height="11" viewBox="0 0 10 11"><circle cx="2.5" cy="2.8" r="2.4" fill="#404656"/><circle cx="7.5" cy="2.8" r="2.4" fill="#404656"/><circle cx="2.5" cy="8" r="2.4" fill="#404656"/><circle cx="7.5" cy="8" r="2.4" fill="#404656"/><circle cx="7.5" cy="2.8" r="1" fill="#fff"/></svg>

<svg style="left:878px;top:565px" width="8" height="11" viewBox="0 0 8 11"><path d="M4 10.5 V1 M0.5 4.5 L4 1 L7.5 4.5" fill="none" stroke="#d6d6d6" stroke-width="1"/></svg>
<div class="t" style="left:891.5px;top:565px;color:#e0e0e0;font-size:8.6px;letter-spacing:-0.3px">添加到源代码管理</div>
<svg style="left:964px;top:569px" width="6" height="4" viewBox="0 0 6 4"><path d="M0 3.5 L3 0.5 L6 3.5 Z" fill="#e0e0e0"/></svg>
<svg style="left:985px;top:565.5px" width="11" height="10" viewBox="0 0 11 10"><path d="M0.5 0.5 H10.5 V2.5 H0.5 Z M1.5 2.5 V9.5 H9.5 V2.5 M4 5 H7" fill="none" stroke="#d6d6d6" stroke-width="1"/></svg>
<div class="t" style="left:1000px;top:565px;color:#e0e0e0;font-size:8.6px;letter-spacing:-0.3px">选择仓库</div>
<svg style="left:1038px;top:569px" width="6" height="4" viewBox="0 0 6 4"><path d="M0 3.5 L3 0.5 L6 3.5 Z" fill="#e0e0e0"/></svg>
<svg style="left:1058px;top:564.5px" width="9" height="11" viewBox="0 0 9 11"><path d="M1 8.5 V4.5 A3.5 3.5 0 0 1 8 4.5 V8.5 L8.5 9 H0.5 Z M3.5 10 H5.5" fill="none" stroke="#d6d6d6" stroke-width="1"/></svg>
<div class="a" style="left:1062.5px;top:569.5px;width:9px;height:9px;border-radius:50%;background:#ef8aa0"></div>
<div class="t" style="left:1062.5px;top:568px;width:9px;text-align:center;color:#8a1028;font-size:7px;line-height:12px;font-weight:bold">1</div>

</body></html>
